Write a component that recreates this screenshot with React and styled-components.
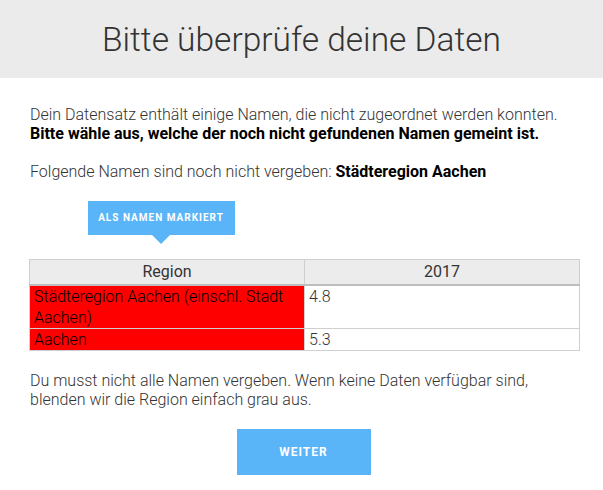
import React from "react";
import styled, { createGlobalStyle } from "styled-components";

const GlobalStyle = createGlobalStyle`
  body {
    margin: 0;
    background: #fff;
    font-family: Roboto, "Liberation Sans", sans-serif;
    color: #333;
  }
`;

const Header = styled.header`
  height: 78px;
  background: #ebebeb;
  display: flex;
  align-items: center;
  justify-content: center;
  h1 {
    margin: 0;
    font-size: 33.5px;
    font-weight: 300;
    color: #333;
  }
`;

const Content = styled.main`
  padding: 28px 26px 0 30px;
`;

const Text = styled.p`
  margin: 0 0 ${(p) => p.gap || 0}px;
  font-size: 16px;
  font-weight: 300;
  line-height: ${(p) => p.lh || 18.5}px;
  color: #333;
  white-space: nowrap;
  strong {
    font-weight: 700;
    color: #000;
  }
`;

const MarkerRow = styled.div`
  display: flex;
  width: 550px;
  margin-left: -1px;
  margin-bottom: 24px;
`;

const MarkerCell = styled.div`
  width: 264px;
  display: flex;
  justify-content: center;
`;

const Tooltip = styled.button`
  position: relative;
  border: none;
  background: #5ab4f8;
  color: #fff;
  font-family: Roboto, "Liberation Sans", sans-serif;
  font-size: 10px;
  font-weight: 700;
  letter-spacing: 1px;
  height: 34px;
  width: 147px;
  padding: 0;
  text-transform: uppercase;
  &::after {
    content: "";
    position: absolute;
    left: 50%;
    bottom: -9px;
    margin-left: -9px;
    border-left: 9px solid transparent;
    border-right: 9px solid transparent;
    border-top: 9px solid #5ab4f8;
  }
`;

const Table = styled.table`
  width: 551px;
  margin-left: -1px;
  border-collapse: collapse;
  font-size: 16px;
  font-weight: 300;
  margin-bottom: 20px;
`;

const Th = styled.th`
  height: 24px;
  padding: 0;
  background: #ececec;
  border: 1px solid #cfcfcf;
  border-bottom: 2px solid #bdbdbd;
  font-weight: 400;
  color: #333;
  width: 50%;
`;

const Td = styled.td`
  border: 1px solid #cfcfcf;
  padding: 0 4px 0;
  line-height: 21px;
  vertical-align: top;
  background: ${(p) => (p.unmatched ? "#ff0000" : "#fff")};
  color: ${(p) => (p.unmatched ? "#000" : "#333")};
`;

const Footer = styled.div`
  display: flex;
  justify-content: center;
  margin-top: 20px;
`;

const Button = styled.button`
  width: 134px;
  height: 46px;
  border: none;
  background: #5ab4f8;
  color: #fff;
  font-family: Roboto, "Liberation Sans", sans-serif;
  font-size: 12px;
  font-weight: 700;
  letter-spacing: 1px;
  text-transform: uppercase;
`;

const rows = [
  { region: "Städteregion Aachen (einschl. Stadt Aachen)", value: "4.8" },
  { region: "Aachen", value: "5.3" },
];

export default function App() {
  return (
    <>
      <GlobalStyle />
      <Header>
        <h1>Bitte überprüfe deine Daten</h1>
      </Header>
      <Content>
        <Text gap={20}>
          Dein Datensatz enthält einige Namen, die nicht zugeordnet werden konnten.
          <br />
          <strong>Bitte wähle aus, welche der noch nicht gefundenen Namen gemeint ist.</strong>
        </Text>
        <Text gap={19}>
          Folgende Namen sind noch nicht vergeben: <strong>Städteregion Aachen</strong>
        </Text>
        <MarkerRow>
          <MarkerCell>
            <Tooltip>Als Namen markiert</Tooltip>
          </MarkerCell>
        </MarkerRow>
        <Table>
          <thead>
            <tr>
              <Th>Region</Th>
              <Th>2017</Th>
            </tr>
          </thead>
          <tbody>
            {rows.map((r) => (
              <tr key={r.region}>
                <Td unmatched>{r.region}</Td>
                <Td>{r.value}</Td>
              </tr>
            ))}
          </tbody>
        </Table>
        <Text lh={19}>
          Du musst nicht alle Namen vergeben. Wenn keine Daten verfügbar sind,
          <br />
          blenden wir die Region einfach grau aus.
        </Text>
        <Footer>
          <Button>Weiter</Button>
        </Footer>
      </Content>
    </>
  );
}
